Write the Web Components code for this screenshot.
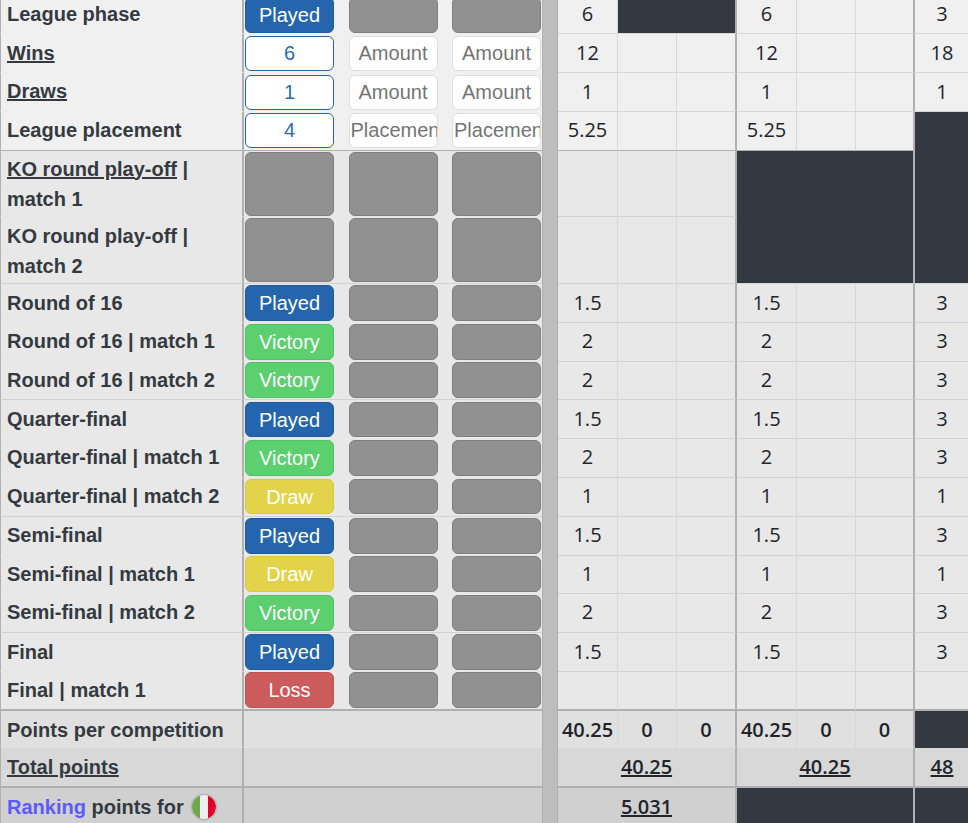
<!DOCTYPE html>
<html><head><meta charset="utf-8"><title>Ranking</title>
<style>
html,body{margin:0;padding:0;height:823px;overflow:hidden;background:#fff}
</style></head><body>
<rank-table>
<rank-row tone="a" style="--bt:2px"><span slot="label">League phase</span><st-btn slot="ctrl" kind="played">Played</st-btn><st-btn slot="ctrl"></st-btn><st-btn slot="ctrl"></st-btn>
 <d-c>6</d-c><d-c span="2" dark end></d-c><d-c>6</d-c><d-c></d-c><d-c end></d-c><d-c last>3</d-c></rank-row>
<rank-row tone="a" style="--bt:2px;--bh:35px"><u slot="label">Wins</u><st-btn slot="ctrl" kind="value">6</st-btn><st-btn slot="ctrl" kind="empty">Amount</st-btn><st-btn slot="ctrl" kind="empty">Amount</st-btn>
 <d-c>12</d-c><d-c></d-c><d-c end></d-c><d-c>12</d-c><d-c></d-c><d-c end></d-c><d-c last>18</d-c></rank-row>
<rank-row tone="a" style="--bt:2px;--bh:35px;--pb:2px"><u slot="label">Draws</u><st-btn slot="ctrl" kind="value">1</st-btn><st-btn slot="ctrl" kind="empty">Amount</st-btn><st-btn slot="ctrl" kind="empty">Amount</st-btn>
 <d-c style="--pb:0px">1</d-c><d-c></d-c><d-c end></d-c><d-c style="--pb:0px">1</d-c><d-c></d-c><d-c end></d-c><d-c last style="--pb:0px">1</d-c></rank-row>
<rank-row tone="a" section style="--bh:35px;--pb:2px"><span slot="label">League placement</span><st-btn slot="ctrl" kind="value">4</st-btn><st-btn slot="ctrl" kind="empty">Placement</st-btn><st-btn slot="ctrl" kind="empty">Placement</st-btn>
 <d-c>5.25</d-c><d-c></d-c><d-c end></d-c><d-c>5.25</d-c><d-c></d-c><d-c end></d-c><d-c last dark cont></d-c></rank-row>
<rank-row tone="b" style="--h:66px;--bh:64px"><span slot="label"><u>KO round play-off</u> |<br>match 1</span><st-btn slot="ctrl"></st-btn><st-btn slot="ctrl"></st-btn><st-btn slot="ctrl"></st-btn>
 <d-c></d-c><d-c></d-c><d-c end></d-c><d-c span="3" dark end cont></d-c><d-c last dark cont></d-c></rank-row>
<rank-row tone="b" group style="--h:67px;--bh:64px;--pt:2px"><span slot="label">KO round play-off |<br>match 2</span><st-btn slot="ctrl"></st-btn><st-btn slot="ctrl"></st-btn><st-btn slot="ctrl"></st-btn>
 <d-c></d-c><d-c></d-c><d-c end></d-c><d-c span="3" dark end></d-c><d-c last dark></d-c></rank-row>
<rank-row tone="b"><span slot="label">Round of 16</span><st-btn slot="ctrl" kind="played">Played</st-btn><st-btn slot="ctrl"></st-btn><st-btn slot="ctrl"></st-btn>
 <d-c>1.5</d-c><d-c></d-c><d-c end></d-c><d-c>1.5</d-c><d-c></d-c><d-c end></d-c><d-c last>3</d-c></rank-row>
<rank-row tone="b" style="--pb:2px"><span slot="label">Round of 16 | match 1</span><st-btn slot="ctrl" kind="victory">Victory</st-btn><st-btn slot="ctrl"></st-btn><st-btn slot="ctrl"></st-btn>
 <d-c>2</d-c><d-c></d-c><d-c end></d-c><d-c>2</d-c><d-c></d-c><d-c end></d-c><d-c last>3</d-c></rank-row>
<rank-row tone="b" group style="--h:38px;--bt:0px;--pb:1px"><span slot="label">Round of 16 | match 2</span><st-btn slot="ctrl" kind="victory">Victory</st-btn><st-btn slot="ctrl"></st-btn><st-btn slot="ctrl"></st-btn>
 <d-c>2</d-c><d-c></d-c><d-c end></d-c><d-c>2</d-c><d-c></d-c><d-c end></d-c><d-c last>3</d-c></rank-row>
<rank-row tone="b" style="--bt:2px;--bh:35px"><span slot="label">Quarter-final</span><st-btn slot="ctrl" kind="played">Played</st-btn><st-btn slot="ctrl"></st-btn><st-btn slot="ctrl"></st-btn>
 <d-c>1.5</d-c><d-c></d-c><d-c end></d-c><d-c>1.5</d-c><d-c></d-c><d-c end></d-c><d-c last>3</d-c></rank-row>
<rank-row tone="b" style="--pb:2px"><span slot="label">Quarter-final | match 1</span><st-btn slot="ctrl" kind="victory">Victory</st-btn><st-btn slot="ctrl"></st-btn><st-btn slot="ctrl"></st-btn>
 <d-c>2</d-c><d-c></d-c><d-c end></d-c><d-c>2</d-c><d-c></d-c><d-c end></d-c><d-c last>3</d-c></rank-row>
<rank-row tone="b" group style="--bh:35px;--pb:2px"><span slot="label">Quarter-final | match 2</span><st-btn slot="ctrl" kind="draw">Draw</st-btn><st-btn slot="ctrl"></st-btn><st-btn slot="ctrl"></st-btn>
 <d-c>1</d-c><d-c></d-c><d-c end></d-c><d-c>1</d-c><d-c></d-c><d-c end></d-c><d-c last>1</d-c></rank-row>
<rank-row tone="b" style="--pb:2px"><span slot="label">Semi-final</span><st-btn slot="ctrl" kind="played">Played</st-btn><st-btn slot="ctrl"></st-btn><st-btn slot="ctrl"></st-btn>
 <d-c>1.5</d-c><d-c></d-c><d-c end></d-c><d-c>1.5</d-c><d-c></d-c><d-c end></d-c><d-c last>3</d-c></rank-row>
<rank-row tone="b" style="--h:38px;--bt:0px;--pb:1px"><span slot="label">Semi-final | match 1</span><st-btn slot="ctrl" kind="draw">Draw</st-btn><st-btn slot="ctrl"></st-btn><st-btn slot="ctrl"></st-btn>
 <d-c>1</d-c><d-c></d-c><d-c end></d-c><d-c>1</d-c><d-c></d-c><d-c end></d-c><d-c last>1</d-c></rank-row>
<rank-row tone="b" group style="--pb:2px"><span slot="label">Semi-final | match 2</span><st-btn slot="ctrl" kind="victory">Victory</st-btn><st-btn slot="ctrl"></st-btn><st-btn slot="ctrl"></st-btn>
 <d-c>2</d-c><d-c></d-c><d-c end></d-c><d-c>2</d-c><d-c></d-c><d-c end></d-c><d-c last>3</d-c></rank-row>
<rank-row tone="b"><span slot="label">Final</span><st-btn slot="ctrl" kind="played">Played</st-btn><st-btn slot="ctrl"></st-btn><st-btn slot="ctrl"></st-btn>
 <d-c>1.5</d-c><d-c></d-c><d-c end></d-c><d-c>1.5</d-c><d-c></d-c><d-c end></d-c><d-c last>3</d-c></rank-row>
<rank-row tone="b" heavy style="--bt:0px;--pb:1px"><span slot="label">Final | match 1</span><st-btn slot="ctrl" kind="loss">Loss</st-btn><st-btn slot="ctrl"></st-btn><st-btn slot="ctrl"></st-btn>
 <d-c></d-c><d-c></d-c><d-c end></d-c><d-c></d-c><d-c></d-c><d-c end></d-c><d-c last></d-c></rank-row>
<rank-row tone="c" style="--h:37px;--pt:2px"><span slot="label">Points per competition</span>
 <d-c strong>40.25</d-c><d-c strong>0</d-c><d-c strong end>0</d-c><d-c strong>40.25</d-c><d-c strong>0</d-c><d-c strong end>0</d-c><d-c last dark></d-c></rank-row>
<rank-row tone="d" heavy style="--h:40px"><u slot="label">Total points</u>
 <d-c span="3" strong end><u>40.25</u></d-c><d-c span="3" strong end><u>40.25</u></d-c><d-c last strong><u>48</u></d-c></rank-row>
<rank-row tone="e" style="--h:37px;--pt:2px"><span slot="label"><span style="color:#5a5aff">Ranking</span> points for <it-flag></it-flag></span>
 <d-c span="3" strong end><u>5.031</u></d-c><d-c span="3" dark end></d-c><d-c last dark></d-c></rank-row>
</rank-table>
<script>
class RankTable extends HTMLElement{
  constructor(){super();this.attachShadow({mode:'open'}).innerHTML=`<style>
  :host{display:block;width:968px;margin-top:-5px;color:#343a40;font:700 20px/30px "Liberation Sans",Arial,sans-serif}
  </style><slot></slot>`;}
}
class RankRow extends HTMLElement{
  constructor(){super();this.attachShadow({mode:'open'}).innerHTML=`<style>
  :host{display:grid;grid-template-columns:244px 298px 16px 410px;height:var(--h,39px);box-sizing:border-box;
    --bg:#f0f0f0;--rule:#d8d8d8;--rule-w:1px;--left-rule:transparent;background:var(--bg)}
  :host([tone="b"]){--bg:#e8e8e8;--rule:#d3d3d3}
  :host([tone="c"]){--bg:#e0e0e0;--rule:transparent}
  :host([tone="d"]){--bg:#d8d8d8}
  :host([tone="e"]){--bg:#d0d0d0}
  :host([group]){--left-rule:var(--rule)}
  :host([section]){--rule:#b0b0b0;--left-rule:#b0b0b0}
  :host([heavy]){--rule:#b0b0b0;--rule-w:2px;--left-rule:#b0b0b0}
  .label{box-sizing:border-box;border-left:1px solid #b0b0b0;border-right:2px solid #b0b0b0;border-bottom:var(--rule-w) solid var(--left-rule);
    padding:var(--pt,0) 0 var(--pb,0) 6px;display:flex;align-items:center;white-space:nowrap}
  .ctrls{box-sizing:border-box;display:grid;grid-template-columns:89px 89px 89px;column-gap:14.5px;align-items:start;padding:var(--bt,1px) 0 0 1px;border-bottom:var(--rule-w) solid var(--left-rule)}
  .band{background:#bdbdbd;border-inline:1.5px solid #b0b0b0;box-sizing:border-box}
  .data{display:grid;grid-template-columns:60px 59px 60px 60px 59px 59px 53px}
  ::slotted(d-c:first-child:not([strong])){padding-left:2px}
  ::slotted(d-c[last]){padding-left:1px}
  </style>
  <div class="label"><div><slot name="label"></slot></div></div>
  <div class="ctrls"><slot name="ctrl"></slot></div>
  <div class="band"></div>
  <div class="data"><slot></slot></div>`;}
}
class StBtn extends HTMLElement{
  constructor(){super();this.attachShadow({mode:'open'}).innerHTML=`<style>
  :host{display:block;box-sizing:border-box;height:var(--bh,36px);min-width:0;overflow:hidden;border:1px solid #7f7f7f;border-radius:6px;background:#919191;color:#fff;
    font:400 20px/34px "Liberation Sans",Arial,sans-serif;text-align:center;white-space:nowrap;padding:0 1px}
  :host([kind="played"]){background:#2465ad;border-color:#1f5a9c}
  :host([kind="victory"]){background:#5ccf6f;border-color:#52c064}
  :host([kind="draw"]){background:#e3d34b;border-color:#d8c842}
  :host([kind="loss"]){background:#cc5c5c;border-color:#c05252}
  :host([kind="value"]){background:#fff;border-color:#2465ad;color:#2c6cb4;line-height:32px}
  :host([kind="empty"]){background:#fff;border-color:#dedede;color:#747474;line-height:32px}
  </style><slot></slot>`;}
}
class DC extends HTMLElement{
  constructor(){super();this.attachShadow({mode:'open'}).innerHTML=`<style>
  :host{display:flex;align-items:center;justify-content:center;box-sizing:border-box;min-width:0;
    padding:var(--pt,0) 0 var(--pb,0);
    border-right:1px solid #d8d8d8;border-bottom:var(--rule-w) solid var(--rule);
    color:#212529;font:400 20px/30px "Open Sans",sans-serif}
  :host([span="2"]){grid-column:span 2}
  :host([span="3"]){grid-column:span 3}
  :host([end]){border-right:2px solid #b0b0b0}
  :host([last]){border-right:0}
  :host([dark]){background:#343941}
  :host([cont]){border-bottom:0}
  :host([strong]){font-weight:600;border-right-color:#d6d6d6}
  :host([strong][end]){border-right-color:#b0b0b0}
  </style><slot></slot>`;}
}
class ItFlag extends HTMLElement{
  constructor(){super();this.attachShadow({mode:'open'}).innerHTML=`<style>
  :host{display:inline-block;width:28px;height:28px;vertical-align:-8px;margin:-1px 0 1px 1px}
  svg{display:block}
  </style><svg width="28" height="28" viewBox="0 0 28 28"><defs><clipPath id="c"><circle cx="14" cy="14" r="12"/></clipPath></defs>
  <g clip-path="url(#c)"><rect x="2" y="2" width="8" height="24" fill="#6fa84a"/><rect x="10" y="2" width="8" height="24" fill="#eeeeee"/><rect x="18" y="2" width="8" height="24" fill="#e2002a"/></g>
  <circle cx="14" cy="14" r="12.7" fill="none" stroke="#b8b8b8" stroke-width="1.6"/></svg>`;}
}
customElements.define('rank-table',RankTable);
customElements.define('rank-row',RankRow);
customElements.define('st-btn',StBtn);
customElements.define('d-c',DC);
customElements.define('it-flag',ItFlag);
</script>
</body></html>
